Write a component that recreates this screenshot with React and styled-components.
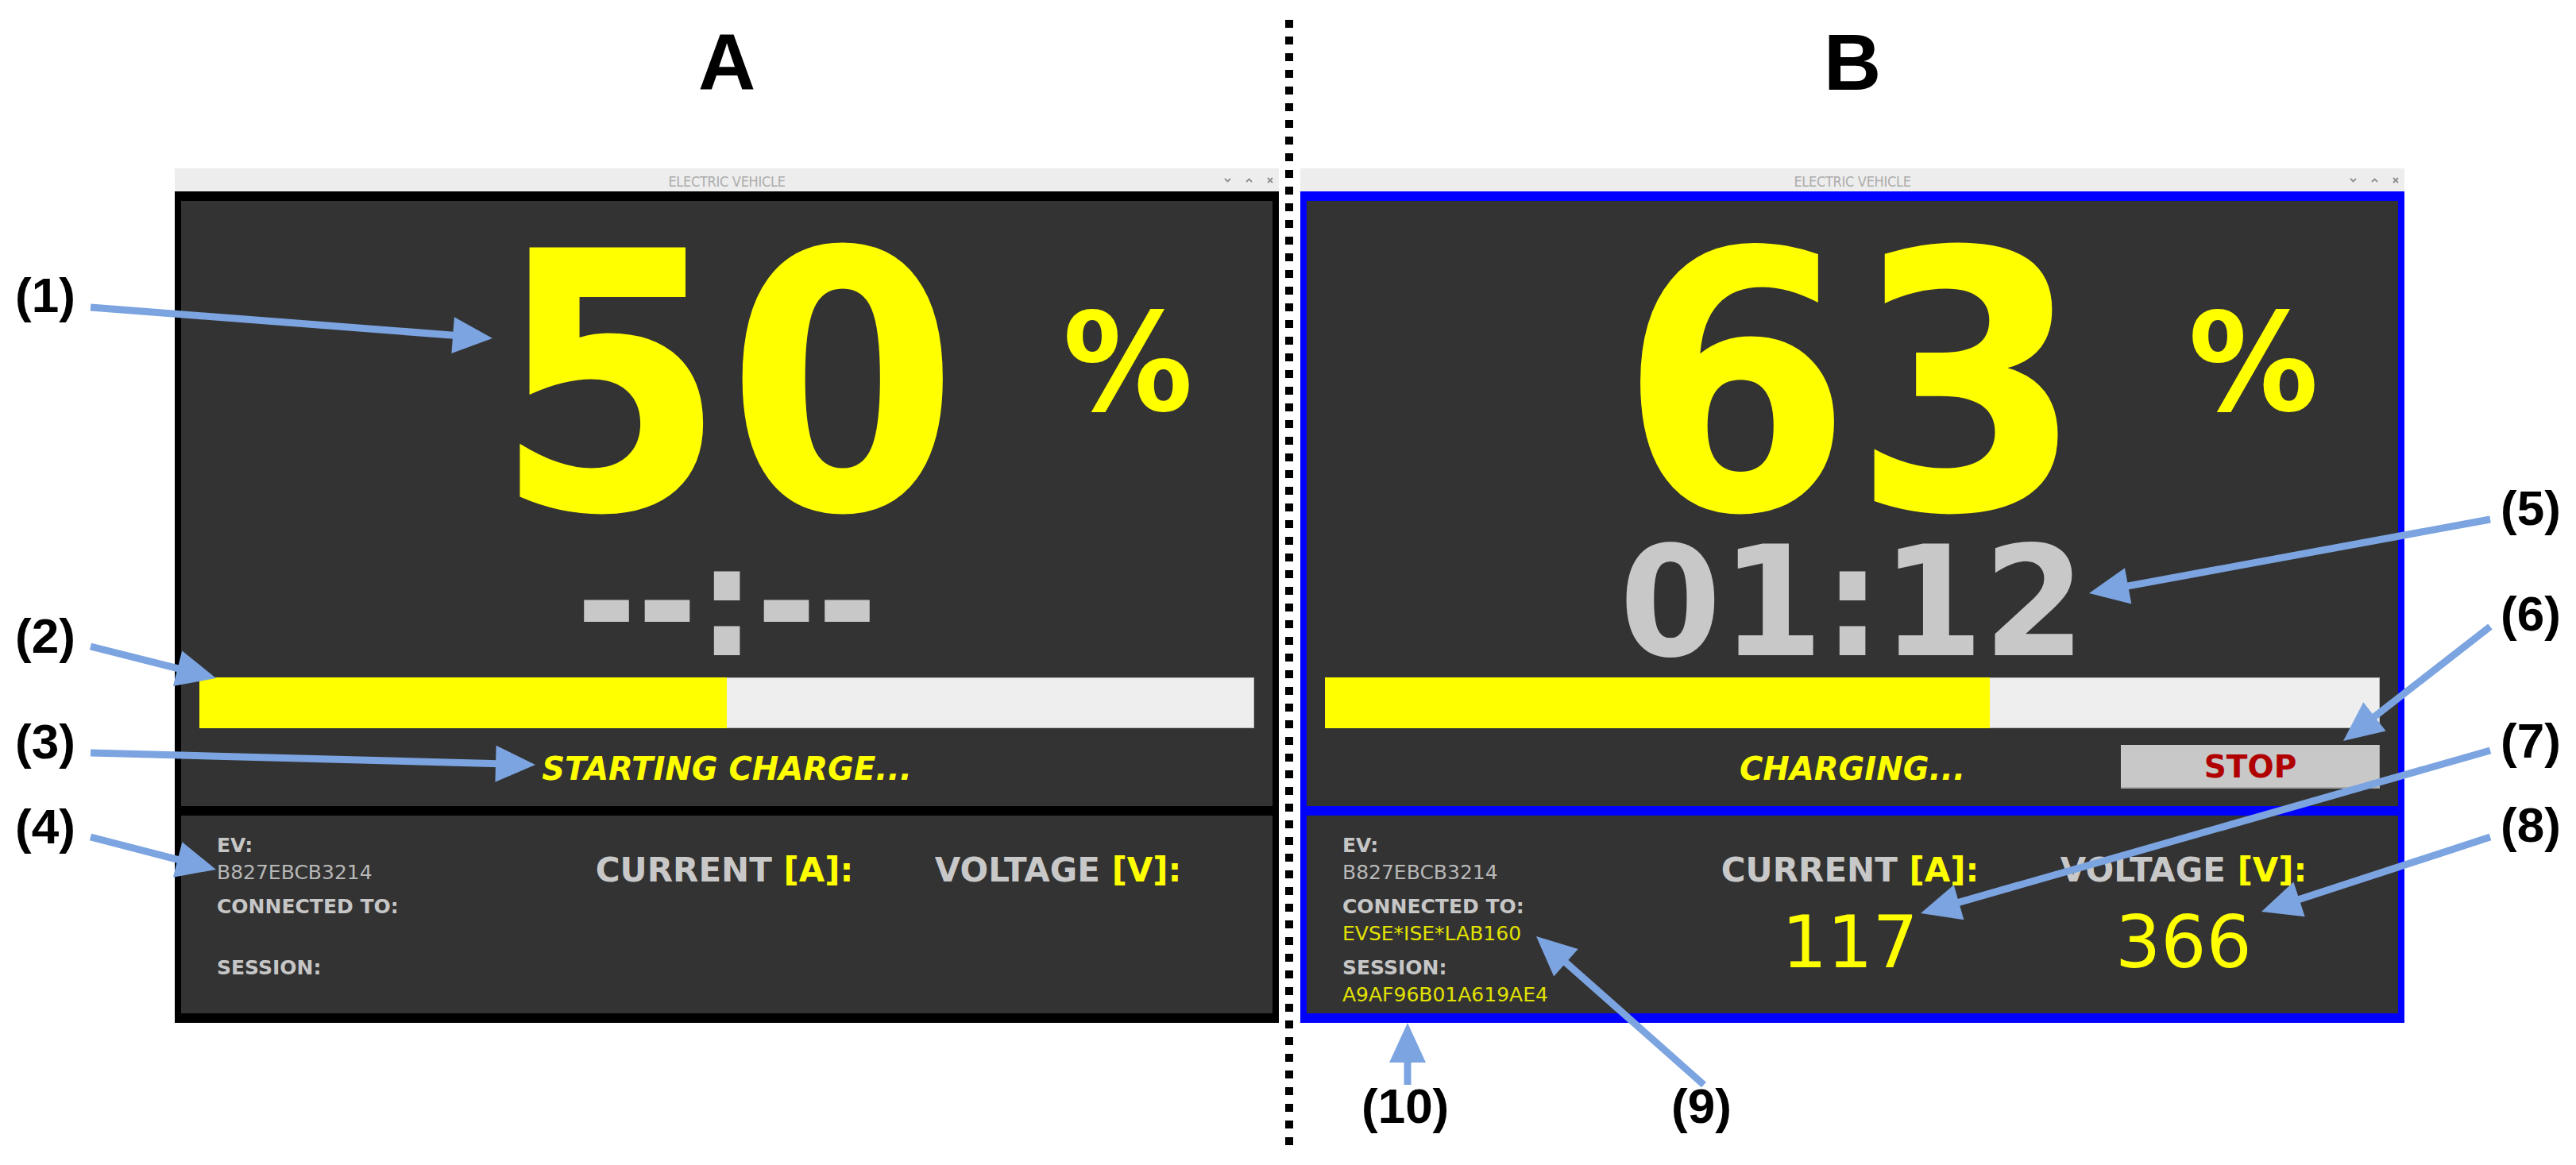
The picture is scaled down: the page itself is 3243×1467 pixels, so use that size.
import React from 'react';
import styled, { createGlobalStyle } from 'styled-components';

const GlobalStyle = createGlobalStyle`
  html, body { margin: 0; padding: 0; background: #ffffff; }
  body { font-family: "DejaVu Sans", "Liberation Sans", sans-serif; }
  * { box-sizing: border-box; }
`;

const YELLOW = '#ffff00';
const LIGHT = '#c8c8c8';

const Page = styled.div`
  position: relative;
  width: 3243px;
  height: 1467px;
  overflow: hidden;
  background: #ffffff;
`;

const Figure = styled.div`
  display: flex;
  align-items: flex-start;
  padding-left: 220px;
`;

const Column = styled.section`
  flex: none;
  width: 1390px;
  display: flex;
  flex-direction: column;
  padding-top: 28px;
`;

const PanelLetter = styled.h1`
  margin: 0;
  height: 100px;
  font: 700 100px/100px "Liberation Sans", Arial, sans-serif;
  text-align: center;
  color: #000000;
`;

const Separator = styled.div`
  flex: none;
  width: 10px;
  height: 1423px;
  margin: 25px 9px 0 8px;
  background: repeating-linear-gradient(to bottom, #000000 0 10px, transparent 10px 21px);
`;

const Window = styled.div`
  margin-top: 84px;
  display: flex;
  flex-direction: column;
`;

const TitleBar = styled.div`
  height: 29px;
  background: #ededed;
  display: grid;
  grid-template-columns: 1fr auto 1fr;
  align-items: center;
  padding: 0 7px 0 7px;
`;

const TitleText = styled.div`
  grid-column: 2;
  padding-top: 4px;
  font: 400 18px/20px "Liberation Sans Narrow", "DejaVu Sans Condensed", "Liberation Sans", sans-serif;
  font-stretch: condensed;
  color: #acacac;
  letter-spacing: -0.3px;
`;

const Controls = styled.div`
  grid-column: 3;
  justify-self: end;
  display: flex;
  align-items: center;
  gap: 18px;
`;

const Screen = styled.div`
  background: #333333;
  border-style: solid;
  border-color: ${p => p.$accent};
  border-width: ${p => (p.$part === 'top' ? '12px 8px 6px' : '6px 8px 12px')};
`;

const MainArea = styled.div`
  display: flex;
  flex-direction: column;
  padding: 22px 23px 22px;
`;

const ChargeRow = styled.div`
  display: grid;
  grid-template-columns: 1fr auto 1fr;
  height: 420px;
`;

const ChargeValue = styled.div`
  grid-column: 2;
  font: 700 452px/420px "DejaVu Sans", sans-serif;
  color: ${YELLOW};
  transform: scaleX(0.93);
  transform-origin: 50% 50%;
`;

const PercentSign = styled.div`
  grid-column: 3;
  align-self: start;
  justify-self: start;
  margin: 97px 0 0 108px;
  font: 700 172px/172px "DejaVu Sans", sans-serif;
  color: ${YELLOW};
  transform: scaleX(0.95);
  transform-origin: 0 50%;
`;

const Timer = styled.div`
  height: 127px;
  text-align: center;
  font: 700 192px/127px "DejaVu Sans", sans-serif;
  color: ${LIGHT};
  white-space: nowrap;
  transform: scaleX(0.96);
  transform-origin: 50% 50%;
`;

const Track = styled.div`
  margin-top: 31px;
  height: 64px;
  background: #eeeeee;
  box-shadow: inset 0 0 0 1px #b9b9b9;
  display: flex;
`;

const Fill = styled.div`
  height: 100%;
  background: ${YELLOW};
`;

const StatusRow = styled.div`
  margin-top: 21px;
  height: 55px;
  display: grid;
  grid-template-columns: 1fr auto 1fr;
  align-items: center;
`;

const StatusText = styled.div`
  grid-column: 2;
  padding-top: 5px;
  font: italic 700 40px/48px "DejaVu Sans", sans-serif;
  color: ${YELLOW};
  white-space: nowrap;
`;

const StopButton = styled.button`
  grid-column: 3;
  justify-self: end;
  width: 326px;
  height: 55px;
  padding: 0;
  border: none;
  background: #c8c8c8;
  box-shadow: inset -1px -2px 0 #a9a9a9;
  font: 700 39px/55px "DejaVu Sans", sans-serif;
  color: #b10000;
`;

const InfoArea = styled.div`
  display: grid;
  grid-template-columns: 429px 420px 420px;
  padding: 21px 0 6px 45px;
`;

const InfoList = styled.div`
  display: flex;
  flex-direction: column;
  gap: 9px;
`;

const InfoGroup = styled.div`
  display: flex;
  flex-direction: column;
`;

const InfoLabel = styled.div`
  font: 700 25px/34px "DejaVu Sans", sans-serif;
  color: #c6c6c6;
`;

const InfoValue = styled.div`
  min-height: 34px;
  font: 400 25px/34px "DejaVu Sans", sans-serif;
  color: ${p => (p.$highlight ? '#e2e200' : '#b8b8b8')};
`;

const Metric = styled.div`
  display: flex;
  flex-direction: column;
  align-items: center;
`;

const MetricLabel = styled.div`
  margin-top: 24px;
  font: 700 42px/48px "DejaVu Sans", sans-serif;
  color: ${LIGHT};
  white-space: nowrap;
`;

const Unit = styled.span`
  color: ${YELLOW};
`;

const MetricValue = styled.div`
  margin-top: 22px;
  min-height: 90px;
  font: 400 90px/90px "DejaVu Sans", sans-serif;
  color: ${YELLOW};
`;

const Overlay = styled.svg`
  position: absolute;
  left: 0;
  top: 0;
  pointer-events: none;
`;

const Callout = styled.span`
  position: absolute;
  left: ${p => p.$x}px;
  top: ${p => p.$y}px;
  font: 700 62px/62px "Liberation Sans", Arial, sans-serif;
  color: #000000;
  white-space: nowrap;
`;

const ARROW = '#7ca4e0';

function Arrow({ x1, y1, x2, y2 }) {
  const dx = x2 - x1;
  const dy = y2 - y1;
  const len = Math.hypot(dx, dy);
  const ux = dx / len;
  const uy = dy / len;
  const hl = 50;
  const hw = 23;
  const bx = x2 - ux * hl;
  const by = y2 - uy * hl;
  const px = -uy;
  const py = ux;
  return (
    <g>
      <line x1={x1} y1={y1} x2={bx + ux * 4} y2={by + uy * 4} stroke={ARROW} strokeWidth="9" />
      <polygon
        points={`${x2},${y2} ${bx + px * hw},${by + py * hw} ${bx - px * hw},${by - py * hw}`}
        fill={ARROW}
      />
    </g>
  );
}

function WindowControls() {
  return (
    <Controls>
      <svg width="9" height="6" viewBox="0 0 9 6">
        <polyline points="1,1 4.5,4.5 8,1" fill="none" stroke="#8e8e8e" strokeWidth="1.8" />
      </svg>
      <svg width="9" height="6" viewBox="0 0 9 6">
        <polyline points="1,5 4.5,1.5 8,5" fill="none" stroke="#8e8e8e" strokeWidth="1.8" />
      </svg>
      <svg width="8" height="8" viewBox="0 0 8 8">
        <path d="M1 1 L7 7 M7 1 L1 7" stroke="#8e8e8e" strokeWidth="1.8" />
      </svg>
    </Controls>
  );
}

function ChargerWindow({ accent, soc, timer, status, showStop, ev, evse, session, current, voltage }) {
  return (
    <Window>
      <TitleBar>
        <TitleText>ELECTRIC VEHICLE</TitleText>
        <WindowControls />
      </TitleBar>
      <Screen $accent={accent} $part="top">
        <MainArea>
          <ChargeRow>
            <ChargeValue>{soc}</ChargeValue>
            <PercentSign>%</PercentSign>
          </ChargeRow>
          <Timer>{timer}</Timer>
          <Track>
            <Fill style={{ width: `${soc}%` }} />
          </Track>
          <StatusRow>
            <StatusText>{status}</StatusText>
            {showStop && <StopButton>STOP</StopButton>}
          </StatusRow>
        </MainArea>
      </Screen>
      <Screen $accent={accent} $part="bottom">
        <InfoArea>
          <InfoList>
            <InfoGroup>
              <InfoLabel>EV:</InfoLabel>
              <InfoValue>{ev}</InfoValue>
            </InfoGroup>
            <InfoGroup>
              <InfoLabel>CONNECTED TO:</InfoLabel>
              <InfoValue $highlight>{evse}</InfoValue>
            </InfoGroup>
            <InfoGroup>
              <InfoLabel>SESSION:</InfoLabel>
              <InfoValue $highlight>{session}</InfoValue>
            </InfoGroup>
          </InfoList>
          <Metric>
            <MetricLabel>
              CURRENT <Unit>[A]:</Unit>
            </MetricLabel>
            <MetricValue>{current}</MetricValue>
          </Metric>
          <Metric>
            <MetricLabel>
              VOLTAGE <Unit>[V]:</Unit>
            </MetricLabel>
            <MetricValue>{voltage}</MetricValue>
          </Metric>
        </InfoArea>
      </Screen>
    </Window>
  );
}

const arrows = [
  { x1: 114, y1: 387, x2: 620, y2: 426 },
  { x1: 114, y1: 814, x2: 272, y2: 854 },
  { x1: 114, y1: 948, x2: 674, y2: 963 },
  { x1: 114, y1: 1054, x2: 272, y2: 1095 },
  { x1: 3135, y1: 654, x2: 2630, y2: 747 },
  { x1: 3135, y1: 789, x2: 2950, y2: 933 },
  { x1: 3135, y1: 945, x2: 2418, y2: 1150 },
  { x1: 3135, y1: 1054, x2: 2847, y2: 1148 },
  { x1: 2145, y1: 1366, x2: 1934, y2: 1179 },
  { x1: 1772, y1: 1366, x2: 1772, y2: 1288 },
];

const callouts = [
  { t: '(1)', x: 19, y: 341 },
  { t: '(2)', x: 19, y: 770 },
  { t: '(3)', x: 19, y: 903 },
  { t: '(4)', x: 19, y: 1010 },
  { t: '(5)', x: 3148, y: 609 },
  { t: '(6)', x: 3148, y: 742 },
  { t: '(7)', x: 3148, y: 902 },
  { t: '(8)', x: 3148, y: 1008 },
  { t: '(10)', x: 1714, y: 1362 },
  { t: '(9)', x: 2104, y: 1362 },
];

export default function App() {
  return (
    <>
      <GlobalStyle />
      <Page>
        <Figure>
          <Column>
            <PanelLetter>A</PanelLetter>
            <ChargerWindow
              accent="#000000"
              soc={50}
              timer="--:--"
              status="STARTING CHARGE..."
              ev="B827EBCB3214"
              evse=""
              session=""
              current=""
              voltage=""
            />
          </Column>
          <Separator />
          <Column>
            <PanelLetter>B</PanelLetter>
            <ChargerWindow
              accent="#0000ff"
              soc={63}
              timer="01:12"
              status="CHARGING..."
              showStop
              ev="B827EBCB3214"
              evse="EVSE*ISE*LAB160"
              session="A9AF96B01A619AE4"
              current="117"
              voltage="366"
            />
          </Column>
        </Figure>
        <Overlay width="3243" height="1467" viewBox="0 0 3243 1467">
          {arrows.map((a, i) => (
            <Arrow key={i} {...a} />
          ))}
        </Overlay>
        {callouts.map(c => (
          <Callout key={c.t} $x={c.x} $y={c.y}>
            {c.t}
          </Callout>
        ))}
      </Page>
    </>
  );
}
